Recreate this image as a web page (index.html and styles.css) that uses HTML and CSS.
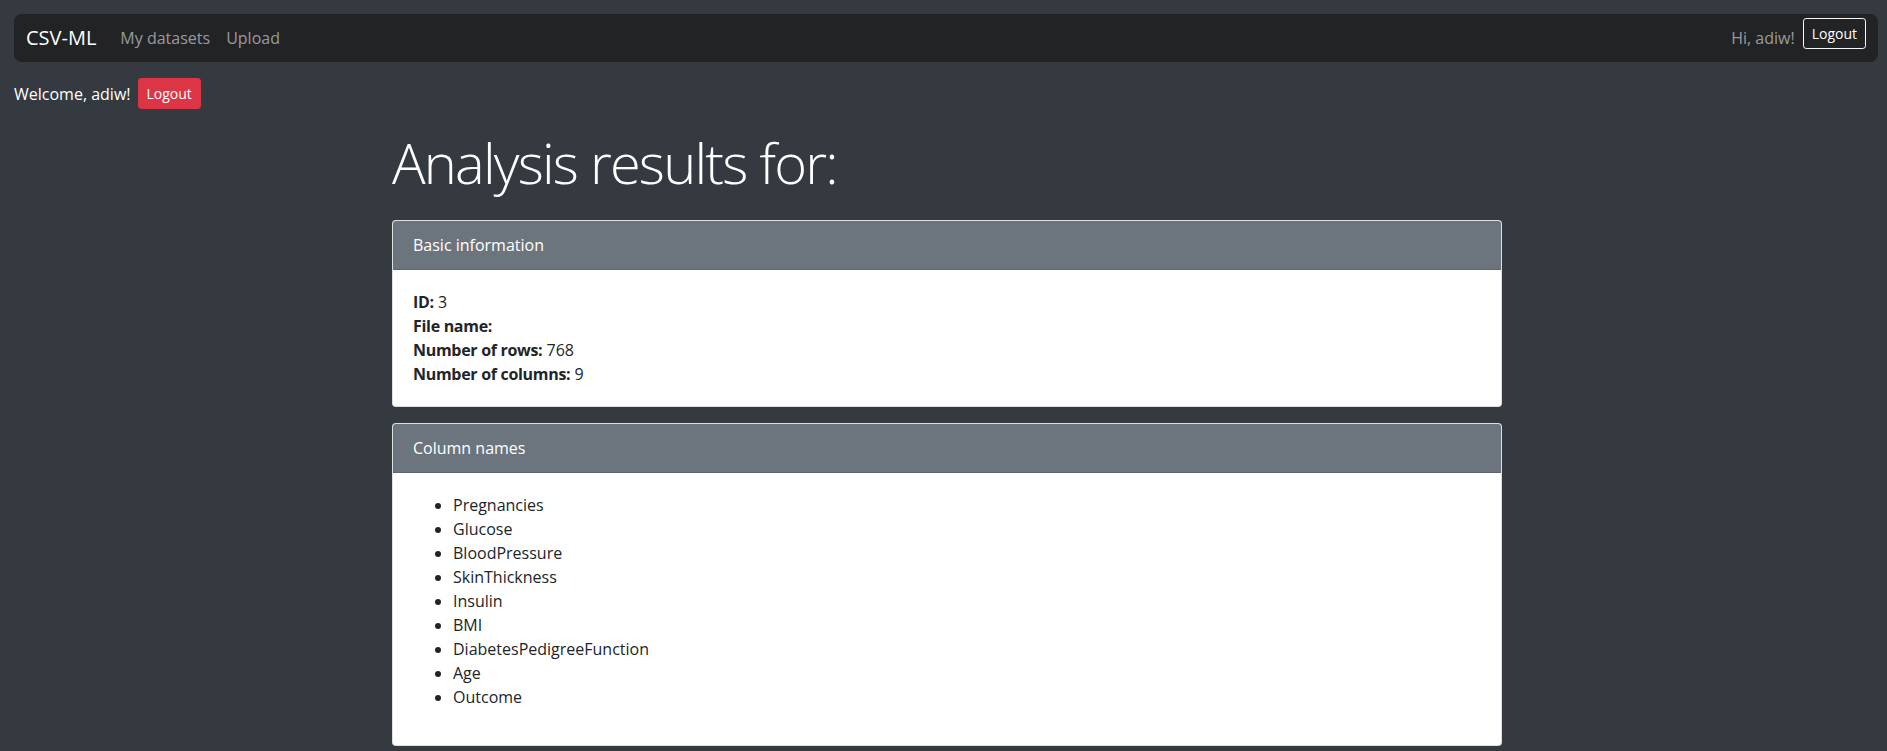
FILE: index.html
```html
<!DOCTYPE html>
<html lang="en">
<head>
<meta charset="utf-8">
<title>CSV-ML - Analysis results</title>
<link rel="stylesheet" href="styles.css">
</head>
<body>
<nav class="navbar">
  <div class="nav-left">
    <a class="brand" href="#">CSV-ML</a>
    <a class="nav-link" href="#">My datasets</a>
    <a class="nav-link" href="#">Upload</a>
  </div>
  <div class="nav-right">
    <span class="nav-text">Hi, adiw!</span>
    <button class="btn btn-outline" type="button">Logout</button>
  </div>
</nav>

<div class="welcome">
  <span>Welcome, adiw!</span>
  <button class="btn btn-danger" type="button">Logout</button>
</div>

<main class="container">
  <h1 class="title">Analysis results for:</h1>

  <section class="card">
    <div class="card-header">Basic information</div>
    <div class="card-body">
      <div class="info"><strong>ID:</strong> 3</div>
      <div class="info"><strong>File name:</strong> </div>
      <div class="info"><strong>Number of rows:</strong> 768</div>
      <div class="info"><strong>Number of columns:</strong> 9</div>
    </div>
  </section>

  <section class="card">
    <div class="card-header">Column names</div>
    <div class="card-body">
      <ul class="col-list">
        <li>Pregnancies</li>
        <li>Glucose</li>
        <li>BloodPressure</li>
        <li>SkinThickness</li>
        <li>Insulin</li>
        <li>BMI</li>
        <li>DiabetesPedigreeFunction</li>
        <li>Age</li>
        <li>Outcome</li>
      </ul>
    </div>
  </section>
</main>
</body>
</html>
```

FILE: styles.css
```css
* { box-sizing: border-box; }

body {
  margin: 0;
  background: #343a40;
  font-family: "Open Sans", "Noto Sans", sans-serif;
  font-size: 16px;
  line-height: 1.5;
  color: #212529;
}

a { text-decoration: none; }

.navbar {
  display: flex;
  justify-content: space-between;
  align-items: center;
  height: 48px;
  margin: 14px 9px 0 14px;
  padding: 0 12px;
  background: #222324;
  border-radius: 8px;
}

.nav-left {
  display: flex;
  align-items: center;
}

.brand {
  color: #fff;
  font-size: 20px;
  margin-right: 16px;
}

.nav-link {
  color: rgba(255, 255, 255, 0.55);
  padding: 0 8px;
}

.nav-right {
  display: flex;
  align-items: flex-start;
  gap: 8px;
  align-self: stretch;
}

.nav-text {
  color: rgba(255, 255, 255, 0.55);
  align-self: center;
}

.btn {
  font-family: inherit;
  font-size: 14px;
  line-height: 1.5;
  padding: 4px 8px;
  border-radius: 3.2px;
  border: 1px solid transparent;
  cursor: pointer;
}

.btn-outline {
  margin-top: 4px;
  background: transparent;
  color: #fff;
  border-color: #f8f9fa;
}

.btn-danger {
  background: #dc3545;
  border-color: #dc3545;
  color: #fff;
}

.welcome {
  display: flex;
  align-items: center;
  gap: 7px;
  margin: 16px 0 0 14px;
  color: #fff;
}

.container {
  width: 1110px;
  margin: 20px 0 0 calc(50% - 551.5px);
}

.title {
  margin: 0 0 24px;
  font-size: 56px;
  font-weight: 300;
  line-height: 1.2;
  letter-spacing: -1.8px;
  color: #fff;
}

.card {
  background: #fff;
  border: 1px solid rgba(0, 0, 0, 0.125);
  border-radius: 4px;
  margin-bottom: 16px;
}

.card-header {
  padding: 12px 20px;
  background: #6c757d;
  color: #fff;
  border-bottom: 1px solid rgba(0, 0, 0, 0.125);
  border-radius: 3px 3px 0 0;
}

.card-body {
  padding: 20px;
}

.info strong {
  letter-spacing: -0.3px;
}

.col-list {
  margin: 0 0 16px;
  padding-left: 40px;
}
```
